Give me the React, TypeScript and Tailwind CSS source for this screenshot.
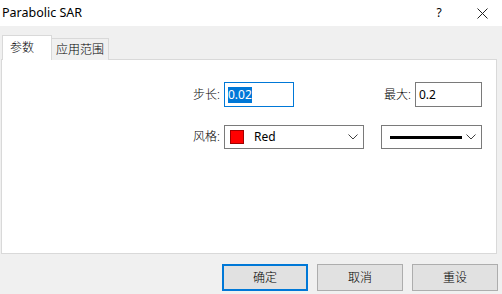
import React from "react";

const font = { fontFamily: '"Segoe UI", "Noto Sans", "Noto Sans CJK SC", sans-serif' };

function Chevron() {
  return (
    <svg width="10" height="6" viewBox="0 0 10 6" className="shrink-0">
      <path d="M0.5 0.5 L5 5 L9.5 0.5" fill="none" stroke="#404040" strokeWidth="1" />
    </svg>
  );
}

export default function App() {
  return (
    <div className="w-[502px] h-[294px] bg-[#f0f0f0] flex flex-col text-[12px] text-black overflow-hidden" style={font}>
      {/* title bar */}
      <div className="h-[26px] bg-white flex items-center shrink-0">
        <div className="pl-[2px] text-[12.5px] flex-1">Parabolic SAR</div>
        <div className="w-[20px] text-center text-[12px] mr-[28px]">?</div>
        <svg width="11" height="11" viewBox="0 0 11 11" className="mr-[14px]">
          <path d="M0.5 0.5 L10.5 10.5 M10.5 0.5 L0.5 10.5" stroke="#222" strokeWidth="1" />
        </svg>
      </div>
      {/* tabs */}
      <div className="pt-[9px] pl-[2px] flex items-end h-[34px] shrink-0 relative z-10 font-light">
        <div className="w-[50px] h-[25px] bg-white border border-b-0 border-[#d9d9d9] flex items-start pt-[3px] pl-[7px]">参数</div>
        <div className="w-[57px] h-[22px] bg-[#f0f0f0] border border-l-0 border-b-0 border-[#d9d9d9] flex items-center pl-[4px]">应用范围</div>
      </div>
      {/* panel */}
      <div className="ml-[1px] w-[496px] h-[195px] -mt-[1px] bg-white border border-[#d9d9d9] shrink-0 flex flex-col pt-[22px]">
        <div className="flex items-center h-[25px]">
          <div className="w-[222px] text-right pr-[4px] font-light">步长:</div>
          <div className="w-[70px] h-[25px] border border-[#0078d7] flex items-center pl-[3px]">
            <span className="bg-[#0078d7] text-white leading-[16px]">0.02</span>
          </div>
          <div className="w-[121px] text-right pr-[4px] font-light">最大:</div>
          <div className="w-[67px] h-[25px] border border-[#7a7a7a] flex items-center pl-[3px]">0.2</div>
        </div>
        <div className="flex items-center h-[24px] mt-[18px]">
          <div className="w-[222px] text-right pr-[4px] font-light">风格:</div>
          <div className="w-[140px] h-[24px] border border-[#7a7a7a] flex items-center pl-[5px] pr-[5px]">
            <div className="w-[14px] h-[14px] bg-[#ff0000] border border-[#a00000]" />
            <span className="ml-[10px] flex-1">Red</span>
            <Chevron />
          </div>
          <div className="w-[17px]" />
          <div className="w-[101px] h-[24px] border border-[#7a7a7a] flex items-center pl-[8px] pr-[5px]">
            <div className="w-[72px] h-[3px] bg-black" />
            <div className="flex-1" />
            <Chevron />
          </div>
        </div>
      </div>
      {/* buttons */}
      <div className="flex justify-end gap-[9px] pr-[4px] mt-[10px] font-light">
        <div className="w-[86px] h-[27px] bg-[#e1e1e1] border-2 border-[#0078d7] flex items-center justify-center">确定</div>
        <div className="w-[86px] h-[27px] bg-[#e1e1e1] border border-[#adadad] flex items-center justify-center">取消</div>
        <div className="w-[86px] h-[27px] bg-[#e1e1e1] border border-[#adadad] flex items-center justify-center">重设</div>
      </div>
    </div>
  );
}
